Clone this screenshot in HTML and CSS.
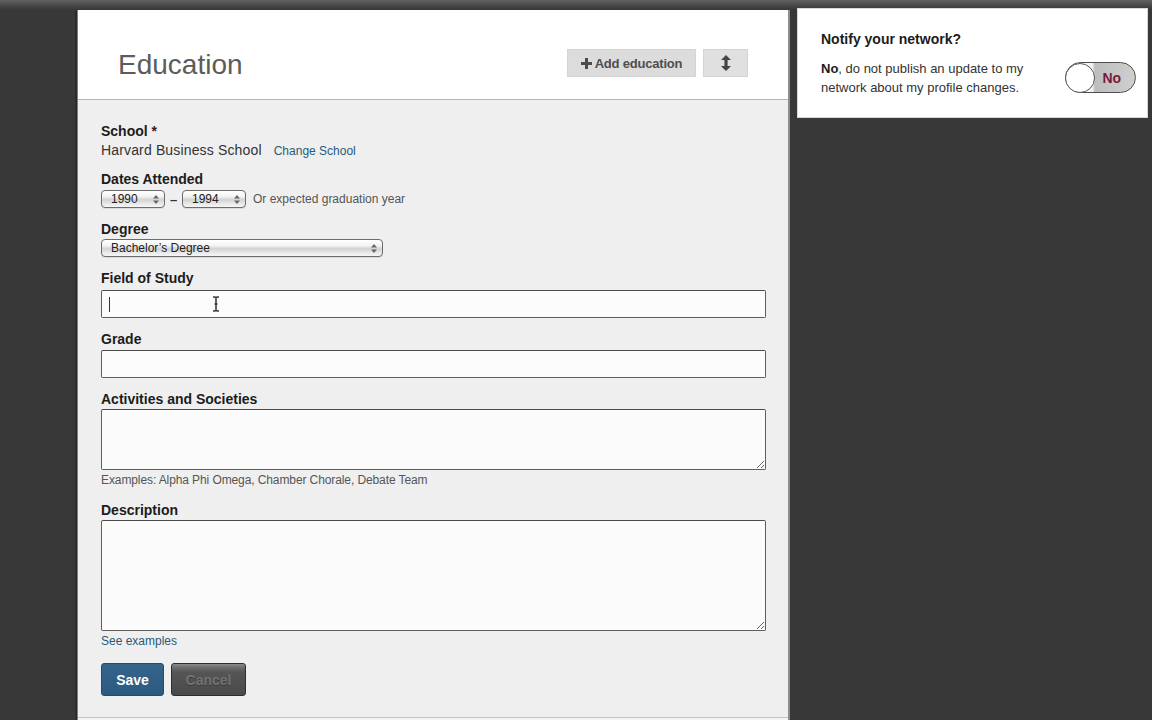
FILE: index.html
```html
<!DOCTYPE html>
<html lang="en">
<head>
<meta charset="utf-8">
<title>Edit Education</title>
<link rel="stylesheet" href="styles.css">
</head>
<body>
<div class="page">
  <main class="panel">
    <header class="panel-head">
      <h1 class="panel-title">Education</h1>
      <div class="head-actions">
        <button type="button" class="btn-light btn-add">
          <svg class="ico-plus" width="11" height="11" viewBox="0 0 11 11"><path d="M4 0h3v4h4v3H7v4H4V7H0V4h4z" fill="#4a4a4a"/></svg>
          Add education
        </button>
        <button type="button" class="btn-light btn-sort" aria-label="Reorder">
          <svg width="10" height="16" viewBox="0 0 10 16"><path d="M5 0L10 5H6.6v6H10L5 16L0 11h3.4V5H0z" fill="#454545"/></svg>
        </button>
      </div>
    </header>

    <form class="edu-form">
      <div class="field f-school">
        <div class="label">School <span class="req">*</span></div>
        <div class="school-value">Harvard Business School <a class="link link-change" href="#">Change School</a></div>
      </div>

      <div class="field f-dates">
        <div class="label">Dates Attended</div>
        <div class="date-row">
          <div class="mselect sel-year"><span class="mselect-text">1990</span><svg class="mselect-arrows" width="6" height="9" viewBox="0 0 6 9"><path d="M3 0L6 3.5H0zM3 9L0 5.5h6z" fill="#666"/></svg></div>
          <span class="dash">–</span>
          <div class="mselect sel-year"><span class="mselect-text">1994</span><svg class="mselect-arrows" width="6" height="9" viewBox="0 0 6 9"><path d="M3 0L6 3.5H0zM3 9L0 5.5h6z" fill="#666"/></svg></div>
          <span class="hint-inline">Or expected graduation year</span>
        </div>
      </div>

      <div class="field f-degree">
        <div class="label">Degree</div>
        <div class="mselect sel-degree"><span class="mselect-text">Bachelor’s Degree</span><svg class="mselect-arrows" width="6" height="9" viewBox="0 0 6 9"><path d="M3 0L6 3.5H0zM3 9L0 5.5h6z" fill="#666"/></svg></div>
      </div>

      <div class="field f-study">
        <div class="label">Field of Study</div>
        <div class="input-wrap">
          <input class="text-input" type="text" value="">
          <span class="caret"></span>
          <svg class="ibeam" width="8" height="16" viewBox="0 0 8 16"><path d="M1 1h2l1 1 1-1h2M4 2v12M1 15h2l1-1 1 1h2M2.5 8h3" stroke="#3a3a3a" stroke-width="1.6" fill="none"/></svg>
        </div>
      </div>

      <div class="field f-grade">
        <div class="label">Grade</div>
        <input class="text-input" type="text" value="">
      </div>

      <div class="field f-activities">
        <div class="label">Activities and Societies</div>
        <textarea class="text-area ta-activities"></textarea>
        <div class="hint">Examples: Alpha Phi Omega, Chamber Chorale, Debate Team</div>
      </div>

      <div class="field f-description">
        <div class="label">Description</div>
        <textarea class="text-area ta-description"></textarea>
        <a class="link hint-link" href="#">See examples</a>
      </div>

      <div class="form-actions">
        <button type="button" class="btn-save">Save</button>
        <button type="button" class="btn-cancel">Cancel</button>
      </div>
    </form>
    <div class="panel-foot"></div>
  </main>

  <aside class="notify">
    <h2 class="notify-title">Notify your network?</h2>
    <div class="notify-row">
      <div class="notify-text">
        <div class="notify-line"><strong>No</strong><span>, do not publish an update to my</span></div>
        <div class="notify-line">network about my profile changes.</div>
      </div>
      <div class="toggle">
        <span class="toggle-knob"></span>
        <span class="toggle-label">No</span>
      </div>
    </div>
  </aside>
</div>
</body>
</html>
```

FILE: styles.css
```css
html, body {
  margin: 0;
  padding: 0;
  height: 720px;
  overflow: hidden;
}

body {
  background-color: #383838;
  background-image: linear-gradient(to bottom, #626262 0px, #474747 6px, #393939 9px, #383838 10px);
  background-size: 100% 10px;
  background-repeat: no-repeat;
  font-family: "Liberation Sans", Arial, sans-serif;
  color: #222;
}

.page {
  display: flex;
  align-items: flex-start;
  padding-left: 77px;
}

/* ---------- main panel ---------- */
.panel {
  margin-top: 10px;
  width: 710px;
  background: #fff;
  border-left: 1px solid #7c7c7c;
  border-right: 2px solid #8c8c8c;
  box-shadow: -2px 0 0 #2c2c2c;
}

.panel-head {
  height: 90px;
  box-sizing: border-box;
  display: flex;
  align-items: center;
  padding: 21px 40px 0 40px;
  border-bottom: 1px solid #b4b4b4;
  background: #fff;
}

.panel-title {
  margin: 0;
  font-size: 28px;
  line-height: 32px;
  font-weight: normal;
  color: #5c5c5c;
}

.head-actions {
  margin-left: auto;
  display: flex;
  gap: 7px;
  margin-top: -4px;
}

.btn-light {
  height: 28px;
  box-sizing: border-box;
  border: 1px solid #d4d4d4;
  background: #dcdcdc;
  font-family: "Liberation Sans", Arial, sans-serif;
  font-weight: bold;
  font-size: 13px;
  color: #4e4e4e;
  display: flex;
  align-items: center;
  justify-content: center;
  padding: 0;
  border-radius: 0;
}

.btn-add {
  width: 129px;
  gap: 3px;
  letter-spacing: -0.2px;
}

.btn-sort {
  width: 45px;
  background: #e0e0e0;
}

/* ---------- form ---------- */
.edu-form {
  background: #efefef;
  padding: 23px 0 21px 23px;
  border-bottom: 1px solid #c2c2c2;
}

.field {
  margin-bottom: 13px;
}

.label {
  font-weight: bold;
  font-size: 14px;
  line-height: 17px;
  color: #1c1c1c;
  margin-bottom: 2px;
}

.req {
  color: #3a1a1a;
}

.f-school {
  margin-bottom: 11px;
}

.school-value {
  font-size: 14px;
  line-height: 18px;
  color: #333;
  margin-top: -1px;
  letter-spacing: 0.15px;
}

.link {
  color: #2b5a78;
  text-decoration: none;
  font-size: 12px;
  letter-spacing: 0;
}

.link-change {
  margin-left: 8px;
}

.date-row {
  display: flex;
  align-items: center;
  height: 18px;
}

.dash {
  font-size: 13px;
  color: #333;
  width: 17px;
  text-align: center;
  font-weight: bold;
}

.hint-inline {
  font-size: 12px;
  color: #555;
  margin-left: 7px;
}

.mselect {
  height: 18px;
  box-sizing: border-box;
  border: 1px solid #6c6c6c;
  border-radius: 4px;
  background: linear-gradient(to bottom, #ffffff 0%, #f3f3f3 35%, #d2d2d2 55%, #e9e9e9 80%, #f6f6f6 100%);
  display: flex;
  align-items: center;
  padding: 0 5px 0 9px;
  font-size: 12px;
  color: #222;
  box-shadow: 0 1px 0 rgba(0, 0, 0, 0.08);
}

.mselect-text {
  flex: 1;
  line-height: 16px;
}

.mselect-arrows {
  flex: none;
}

.sel-year {
  width: 64px;
}

.f-degree .label {
  margin-bottom: 1px;
}

.sel-degree {
  width: 282px;
}

.f-study .label {
  margin-bottom: 3px;
}

.input-wrap {
  position: relative;
  width: 665px;
}

.text-input {
  display: block;
  width: 665px;
  height: 28px;
  box-sizing: border-box;
  margin: 0;
  border: 1px solid #5e5e5e;
  border-top-color: #4c4c4c;
  border-radius: 2px;
  background: #fcfcfc;
  font-family: "Liberation Sans", Arial, sans-serif;
  font-size: 13px;
  padding: 0 7px;
  outline: none;
}

.caret {
  position: absolute;
  left: 8px;
  top: 7px;
  width: 1px;
  height: 15px;
  background: #333;
}

.ibeam {
  position: absolute;
  left: 111px;
  top: 6px;
}

.f-activities .label {
  margin-bottom: 1px;
}

.text-area {
  display: block;
  width: 665px;
  box-sizing: border-box;
  margin: 0;
  border: 1px solid #5e5e5e;
  border-top-color: #4c4c4c;
  border-radius: 2px;
  background: #fbfbfb;
  font-family: "Liberation Sans", Arial, sans-serif;
  font-size: 13px;
  padding: 4px 7px;
  outline: none;
}

.ta-activities {
  height: 61px;
}

.ta-description {
  height: 111px;
}

.hint {
  font-size: 12px;
  line-height: 14px;
  color: #555;
  margin-top: 3px;
  letter-spacing: -0.1px;
}

.f-activities {
  margin-bottom: 15px;
}

.f-description .label {
  margin-bottom: 1px;
}

.hint-link {
  display: block;
  line-height: 14px;
  margin-top: 3px;
}

.f-description {
  margin-bottom: 0;
}

.form-actions {
  display: flex;
  gap: 7px;
  margin-top: 15px;
}

.btn-save {
  width: 63px;
  height: 33px;
  border: 1px solid #24496a;
  border-radius: 3px;
  background: linear-gradient(to bottom, #34648c 0%, #2c5a80 100%);
  color: #fff;
  font-family: "Liberation Sans", Arial, sans-serif;
  font-weight: bold;
  font-size: 14px;
  padding: 0;
}

.btn-cancel {
  width: 75px;
  height: 33px;
  border: 1px solid #2e2e2e;
  border-radius: 3px;
  background: linear-gradient(to bottom, #8a8a8a 0px, #6a6a6a 4px, #555 8px, #4a4a4a 100%);
  color: #727272;
  font-family: "Liberation Sans", Arial, sans-serif;
  font-weight: bold;
  font-size: 14px;
  padding: 0;
  text-shadow: 0 1px 0 #3a3a3a;
}

.panel-foot {
  height: 20px;
  background: #f4f4f4;
}

/* ---------- notify sidebar ---------- */
.notify {
  margin-top: 8px;
  margin-left: 7px;
  width: 351px;
  height: 110px;
  box-sizing: border-box;
  background: #fff;
  border: 1px solid #d8d8d8;
  padding: 22px 11px 0 23px;
}

.notify-title {
  margin: 0;
  font-size: 14px;
  line-height: 17px;
  font-weight: bold;
  color: #1c1c1c;
}

.notify-row {
  display: flex;
  align-items: center;
  justify-content: space-between;
  margin-top: 11px;
}

.notify-text {
  width: 232px;
  font-size: 13px;
  line-height: 19px;
  color: #333;
}

.notify-text strong {
  color: #1c1c1c;
}

.toggle {
  width: 71px;
  height: 31px;
  box-sizing: border-box;
  border: 1.5px solid #4e4e4e;
  border-radius: 16px;
  background: linear-gradient(to right, #ffffff 0%, #f4f4f4 38%, #bdbdbd 42%, #cfcfcf 100%);
  display: flex;
  align-items: center;
  margin-top: -1px;
}

.toggle-knob {
  width: 30px;
  height: 30px;
  box-sizing: border-box;
  margin-left: -1.5px;
  border-radius: 50%;
  border: 1.5px solid #555;
  background: #fff;
}

.toggle-label {
  margin-left: 8px;
  font-weight: bold;
  font-size: 14px;
  color: #7a1a3a;
}
```
